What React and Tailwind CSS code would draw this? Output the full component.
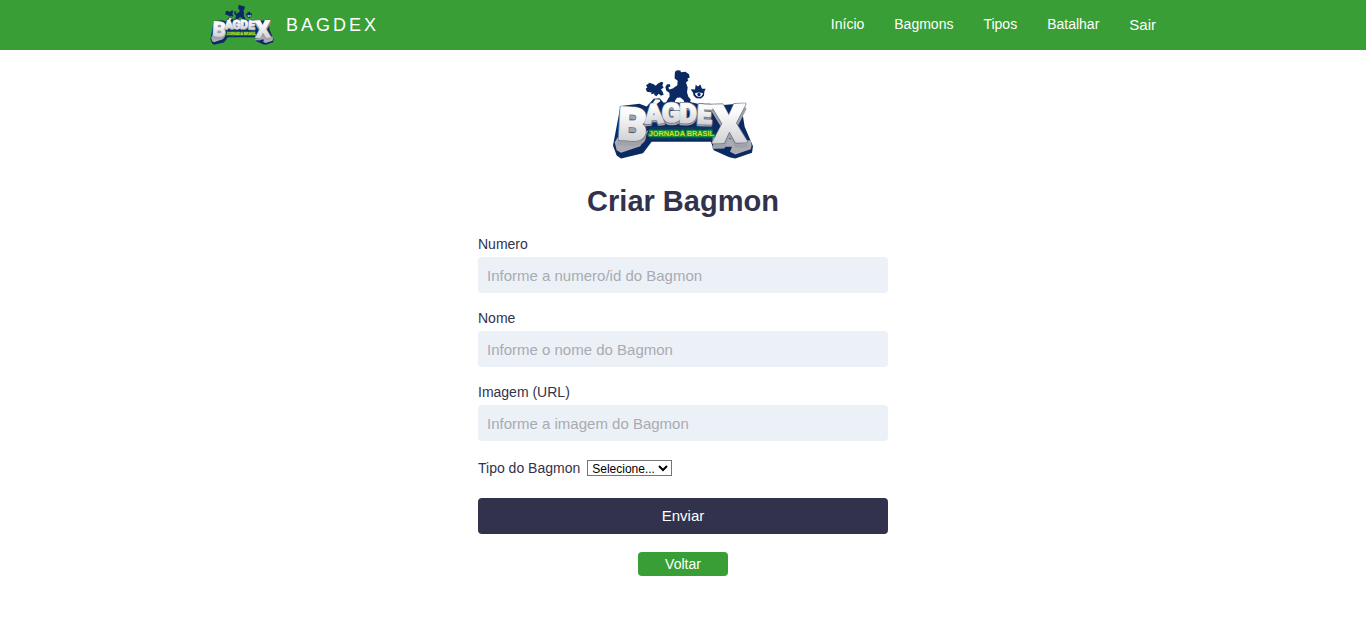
import React from "react";

const letters = [
  { char: "B", x: 36, y: 231, size: 136, turn: 3 },
  { char: "X", x: 324, y: 242, size: 158, turn: -2 },
  { char: "A", x: 121, y: 184, size: 80, turn: -3 },
  { char: "G", x: 171, y: 181, size: 80, turn: 0 },
  { char: "D", x: 223, y: 181, size: 80, turn: 1 },
  { char: "E", x: 275, y: 183, size: 78, turn: 3 },
];

function Lettering({ shift, ...props }) {
  return (
    <g
      fontFamily="Roboto, 'Liberation Sans', sans-serif"
      fontWeight="900"
      strokeLinejoin="round"
      aria-hidden="true"
      {...props}
    >
      {letters.map(({ char, x, y, size, turn }) => (
        <text
          key={char}
          x={x}
          y={y + (size > 100 ? shift : shift / 3)}
          fontSize={size}
          transform={`rotate(${turn} ${x} ${y})`}
        >
          {char}
        </text>
      ))}
    </g>
  );
}

function Logo({ className, id }) {
  return (
    <svg viewBox="24 24 420 266" className={className} role="img" aria-label="Bagdex Jornada Brasil">
      <defs>
        <linearGradient id={`${id}-face`} x1="0" y1="0" x2="0" y2="1">
          <stop offset="0.3" stopColor="#fbfbfb" />
          <stop offset="0.85" stopColor="#cfcfd3" />
        </linearGradient>
      </defs>

      <g fill="#0b2a63">
        {/* dog */}
        <path d="M209 40 L210 29 L216 24 L226 25 L228 30 L241 29 L252 36 L254 46 L247 50 L250 55 L243 61 L248 76 L246 90 L250 104 L257 112 L255 126 L240 126 L236 114 L226 106 L216 107 L210 116 L209 128 L180 126 L188 112 L194 102 L193 92 L184 86 L181 75 L186 66 L195 66 L196 73 L190 76 L193 82 L203 79 L217 69 L218 56 L209 49 Z" />
        {/* bird */}
        <path d="M123 69 L134 62 L146 66 L152 71 L158 65 L169 59 L175 62 L172 70 L176 76 L168 82 L173 89 L176 98 L168 101 L161 95 L154 102 L147 98 L149 94 L138 96 L140 91 L126 89 L122 80 L127 76 Z" />
        {/* hat creature */}
        <path d="M257 81 L270 82 L272 68 L279 73 L286 67 L291 80 L302 80 L298 89 L297 101 L288 109 L274 108 L266 101 L264 92 Z" />
      </g>
      <path d="M270 93 Q281 89 294 93 Q291 105 281 104 Q272 103 270 93 Z" fill="#ffffff" />
      <circle cx="282" cy="97" r="5" fill="#0b2a63" />

      {/* base slab behind the lettering */}
      <path d="M45 140 L54 131 L103 125 L125 133 L146 110 L164 108 L176 122 L202 118 L224 122 L252 119 L278 125 L317 125 L338 130 L398 125 L409 132 L419 194 L444 252 L441 272 L391 289 L373 285 L326 264 L318 239 L140 239 L114 273 L48 289 L35 280 L24 250 Z" fill="#0b2a63" />
      {/* sloping grey feet */}
      <path d="M29 240 L38 225 L108 215 L130 205 L106 252 L48 272 L35 264 Z" fill="#acadb4" />
      <path d="M320 222 L362 224 L382 234 L437 234 L440 250 L437 261 L391 277 L375 269 L381 254 L359 254 L347 259 L325 249 Z" fill="#acadb4" />

      <Lettering shift={14} fill="#a1a3ab" stroke="#a1a3ab" strokeWidth="8" />
      <Lettering shift={0} fill="#5f6780" stroke="#5f6780" strokeWidth="9" />
      <Lettering shift={0} fill={`url(#${id}-face)`} stroke={`url(#${id}-face)`} strokeWidth="5" />
      <path d="M144 121 L151 111 L164 112 L166 117 L154 126 Z" fill="#f4f4f5" />

      {/* tagline */}
      <path d="M134 194 L325 194 L323 232 L134 232 Z" fill="#0b3b5c" />
      <text
        x="229"
        y="222"
        textAnchor="middle"
        fontFamily="'Liberation Sans', Arial, sans-serif"
        fontWeight="700"
        fontSize="22"
        fill="#d9e021"
        stroke="#178a3c"
        strokeWidth="8"
        paintOrder="stroke"
      >
        JORNADA BRASIL
      </text>
    </svg>
  );
}

const links = ["Início", "Bagmons", "Tipos", "Batalhar"];

const fields = [
  { id: "numero", label: "Numero", placeholder: "Informe a numero/id do Bagmon" },
  { id: "nome", label: "Nome", placeholder: "Informe o nome do Bagmon" },
  { id: "imagem", label: "Imagem (URL)", placeholder: "Informe a imagem do Bagmon" },
];

export default function App() {
  return (
    <div className="bg-white font-['Liberation_Sans',Arial,sans-serif] text-[#32324d]">
      <header className="bg-[#389e35] px-4 text-white">
        <div className="mx-auto flex h-[50px] max-w-[946px] items-center justify-between">
          <a href="#inicio" className="flex items-center gap-3">
            <Logo id="brand" className="h-10 w-16" />
            <span className="text-lg tracking-[3px]">BAGDEX</span>
          </a>
          <nav className="flex items-center gap-[30px]">
            <div className="flex gap-[30px] pb-0.5 text-sm">
              {links.map((name) => (
                <a key={name} href={`#${name.toLowerCase()}`}>
                  {name}
                </a>
              ))}
            </div>
            <button type="button" className="text-[15px]">
              Sair
            </button>
          </nav>
        </div>
      </header>

      <main className="mx-auto flex max-w-[410px] flex-col items-center pt-5 pb-12">
        <Logo id="hero" className="h-[89px] w-[140px]" />
        <h1 className="mt-6 text-[29px] leading-9 font-bold">Criar Bagmon</h1>

        <form className="mt-[17px] flex w-full flex-col" onSubmit={(e) => e.preventDefault()}>
          {fields.map((field) => (
            <div key={field.id} className="mb-[17px] flex flex-col">
              <label htmlFor={field.id} className="pb-[5px] text-sm leading-4">
                {field.label}
              </label>
              <input
                id={field.id}
                type="text"
                placeholder={field.placeholder}
                className="h-9 w-full rounded bg-[#ecf1f8] px-[9px] text-[15px] outline-none placeholder:text-[#a9abb0]"
              />
            </div>
          ))}
          <div className="flex items-center gap-[7px]">
            <label htmlFor="tipo" className="text-sm">
              Tipo do Bagmon
            </label>
            <select id="tipo" className="h-4 w-[85px] border border-[#767676] bg-white text-xs text-black">
              <option>Selecione...</option>
            </select>
          </div>
          <button type="submit" className="mt-5 h-9 w-full rounded bg-[#32324d] text-[15px] text-white">
            Enviar
          </button>
        </form>

        <button type="button" className="mt-[18px] h-6 w-[90px] rounded bg-[#389e35] text-sm text-white">
          Voltar
        </button>
      </main>
    </div>
  );
}
